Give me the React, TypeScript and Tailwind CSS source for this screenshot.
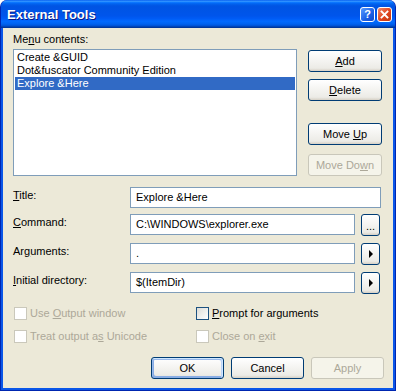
import type { ReactNode } from "react";
import clsx from "clsx";

const ITEMS = ["Create &GUID", "Dot&fuscator Community Edition", "Explore &Here"];

function U({ children }: { children: ReactNode }) {
  return <span className="underline">{children}</span>;
}

function Btn({
  children,
  disabled,
  primary,
  className,
}: {
  children: ReactNode;
  disabled?: boolean;
  primary?: boolean;
  className?: string;
}) {
  return (
    <div
      className={clsx(
        "flex h-[22px] shrink-0 items-center justify-center rounded-[3px] border",
        disabled
          ? "border-[#C9C7BA] bg-[#F5F4EA] text-[#ACA899]"
          : "border-[#003C74] bg-[linear-gradient(180deg,#ffffff,#ecebe6_86%,#d6d0c5)] text-black",
        primary &&
          "shadow-[inset_-1px_1px_#cee7ff,inset_1px_2px_#98b8ea,inset_-2px_2px_#bcd4f6,inset_1px_-1px_#89ade4,inset_2px_-2px_#89ade4]",
        className
      )}
    >
      <span className="flex items-center whitespace-pre">{children}</span>
    </div>
  );
}

function Check({ children, disabled }: { children: ReactNode; disabled?: boolean }) {
  return (
    <div className="flex items-center gap-[3px]">
      <div
        className={clsx(
          "size-[13px] shrink-0 border",
          disabled
            ? "border-[#CAC8BB] bg-white"
            : "border-[#1C5180] bg-[linear-gradient(135deg,#dcdcd7,#ffffff)]"
        )}
      />
      <span className={disabled ? "text-[#ACA899]" : "text-black"}>{children}</span>
    </div>
  );
}

function Arrow() {
  return <div className="h-0 w-0 border-y-[4px] border-l-[4px] border-y-transparent border-l-black" />;
}

function Field({
  label,
  value,
  wide,
  side,
  className,
}: {
  label: ReactNode;
  value: string;
  wide?: boolean;
  side?: ReactNode;
  className?: string;
}) {
  return (
    <div className={clsx("flex items-start", className)}>
      <div className="w-[117px] shrink-0 pt-[2px]">{label}</div>
      <div
        className={clsx(
          "flex h-[21px] shrink-0 items-center border border-[#7F9DB9] bg-white pl-[5px]",
          wide ? "w-[251px]" : "w-[225px]"
        )}
      >
        {value}
      </div>
      {side && (
        <Btn className="ml-[6px] h-[20px] w-[19px]">
          {side}
        </Btn>
      )}
    </div>
  );
}

export default function App() {
  return (
    <div className="flex h-[391px] w-[396px] flex-col rounded-t-[7px] border-x border-b border-[#0026B0] bg-[#0A56E8] font-['Liberation_Sans',Arial,sans-serif] text-[11px] leading-[13px]">
      {/* title bar */}
      <div className="flex h-[28px] shrink-0 items-center rounded-t-[7px] bg-[linear-gradient(180deg,#0058ee_0%,#3593ff_4%,#288eff_6%,#127dff_8%,#036ffc_10%,#0262ee_14%,#0057e5_20%,#0054e3_24%,#0055eb_56%,#005bf5_66%,#026afe_76%,#0062ef_86%,#0052d6_92%,#0040ab_96%,#003092_100%)] pl-[6px] pr-[3px]">
        <span className="text-[13px] font-bold text-white [text-shadow:1px_1px_0_#0a1883]">External Tools</span>
        <div className="ml-auto flex gap-[2px]">
          <div className="flex size-[15px] items-center justify-center rounded-[3px] border border-white bg-[linear-gradient(135deg,#5a9bff,#1b5fe6_60%,#1048c8)] text-[11px] font-bold leading-none text-white">
            ?
          </div>
          <div className="flex size-[15px] items-center justify-center rounded-[3px] border border-white bg-[linear-gradient(135deg,#f08a6c,#e0441d_55%,#c0360f)]">
            <svg width="9" height="9" viewBox="0 0 9 9">
              <path d="M1.5 1.5 L7.5 7.5 M7.5 1.5 L1.5 7.5" stroke="white" strokeWidth="1.8" strokeLinecap="square" />
            </svg>
          </div>
        </div>
      </div>

      {/* client area */}
      <div className="mx-[2px] mb-[2px] flex flex-1 flex-col bg-[#ECE9D8] pl-[10px] pt-[5px] text-black">
        <div>
          Me<U>n</U>u contents:
        </div>
        <div className="mt-[3px] flex items-start">
          <div className="h-[127px] w-[284px] shrink-0 border border-[#7F9DB9] bg-white p-[1px]">
            {ITEMS.map((item, i) => (
              <div
                key={item}
                className={clsx("h-[13px] whitespace-nowrap pl-[2px]", i === 2 ? "bg-[#316AC5] text-white" : "")}
              >
                {item}
              </div>
            ))}
          </div>
          <div className="ml-[11px] flex w-[74px] flex-col pt-[1px]">
            <Btn>
              <span>
                <U>A</U>dd
              </span>
            </Btn>
            <Btn className="mt-[7px]">
              <span>
                <U>D</U>elete
              </span>
            </Btn>
            <Btn className="mt-[22px]">
              <span>
                Move <U>U</U>p
              </span>
            </Btn>
            <Btn disabled className="mt-[9px]">
              <span>
                Move Do<U>w</U>n
              </span>
            </Btn>
          </div>
        </div>

        <Field
          className="mt-[11px]"
          wide
          label={
            <>
              <U>T</U>itle:
            </>
          }
          value="Explore &Here"
        />
        <Field
          className="mt-[6px]"
          label={
            <>
              <U>C</U>ommand:
            </>
          }
          value="C:\WINDOWS\explorer.exe"
          side={<span className="pt-[3px] leading-none">...</span>}
        />
        <Field
          className="mt-[7px]"
          label={
            <>
              Ar<U>g</U>uments:
            </>
          }
          value="."
          side={<Arrow />}
        />
        <Field
          className="mt-[7px]"
          label={
            <>
              <U>I</U>nitial directory:
            </>
          }
          value="$(ItemDir)"
          side={<Arrow />}
        />

        <div className="mt-[13px] flex">
          <div className="flex w-[183px] flex-col gap-[10px] pl-[1px]">
            <Check disabled>
              Use <U>O</U>utput window
            </Check>
            <Check disabled>
              Treat output a<U>s</U> Unicode
            </Check>
          </div>
          <div className="flex flex-col gap-[10px]">
            <Check>
              <U>P</U>rompt for arguments
            </Check>
            <Check disabled>
              Close on <U>e</U>xit
            </Check>
          </div>
        </div>

        <div className="mt-[14px] flex gap-[7px] pl-[138px]">
          <Btn primary className="w-[73px]">
            OK
          </Btn>
          <Btn className="w-[73px]">Cancel</Btn>
          <Btn disabled className="w-[73px]">
            Apply
          </Btn>
        </div>
      </div>
    </div>
  );
}
